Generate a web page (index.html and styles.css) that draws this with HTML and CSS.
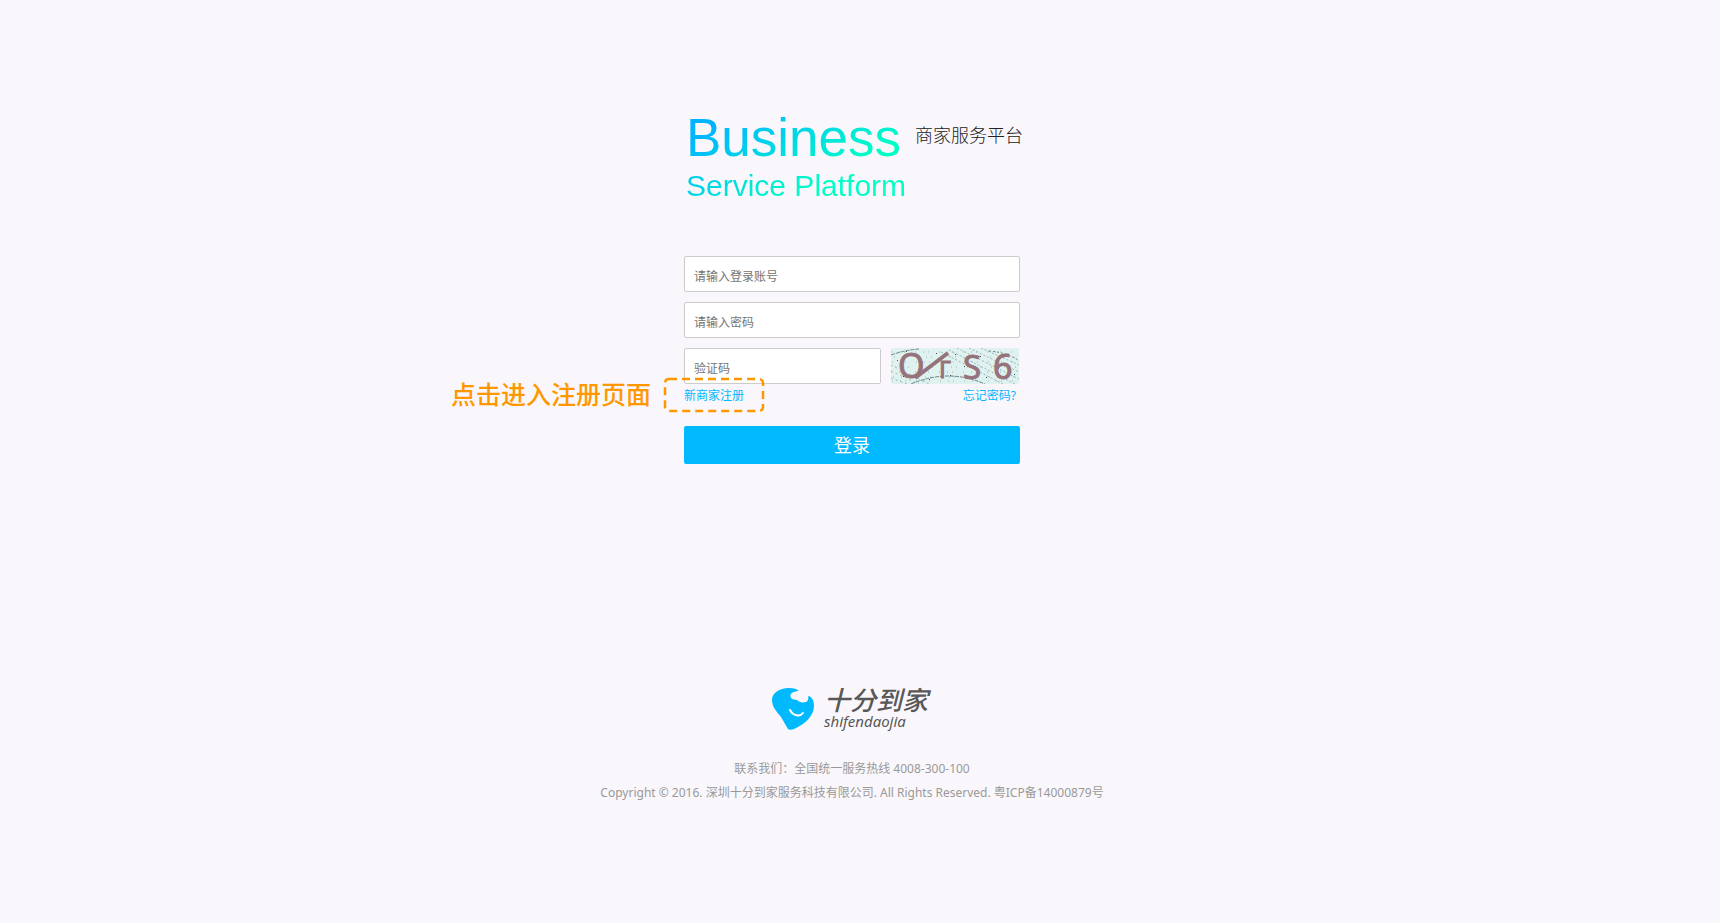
FILE: index.html
```html
<!DOCTYPE html>
<html lang="zh-CN">
<head>
<meta charset="utf-8">
<title>商家服务平台</title>
<link rel="stylesheet" href="styles.css">
</head>
<body>
<main class="login">
  <header class="brand">
    <h1 class="brand-name"><span class="brand-main">Business</span><span class="brand-sub">Service Platform</span></h1>
    <p class="brand-cn">商家服务平台</p>
  </header>
  <form class="form">
    <input class="field" type="text" aria-label="登录账号" placeholder="请输入登录账号">
    <input class="field" type="password" aria-label="密码" placeholder="请输入密码">
    <div class="code-row">
      <input class="field" type="text" aria-label="验证码" placeholder="验证码">
      <svg class="captcha" viewBox="0 0 128 36" role="img" aria-label="验证码图片">
        <rect width="128" height="36" fill="#dff2f0"/>
        <g fill="none" stroke="#9db7b9" stroke-width="1">
          <path d="M0 4H128M3 9H128M1 14H128M4 19H128M0 24H128M2 29H128M1 33H128" stroke-dasharray="1 7 1 4 1 10"/>
          <path d="M58 2L124 36M66 0L128 31M78 0L128 24M50 4L112 36M90 0L128 17" stroke-dasharray="2 2"/>
          <path d="M0 30L16 36M0 23L28 36M0 17L38 36" stroke-dasharray="2 3"/>
        </g>
        <g fill="none" stroke="#6f8587" stroke-width="1">
          <path d="M0 7Q14 2 28 1M20 36Q58 20 94 36" stroke-dasharray="4 1"/>
          <path d="M98 3Q114 4 127 12" stroke-dasharray="2 2"/>
        </g>
        <g fill="#384a68">
          <path d="M6 12h1v1h-1zM15 3h1v1h-1zM31 14h1v1h-1zM45 5h1v1h-1zM59 27h1v1h-1zM64 6h1v1h-1zM73 18h1v1h-1zM89 8h1v1h-1zM95 29h1v1h-1zM107 20h1v1h-1zM123 26h1v1h-1zM12 28h1v1h-1zM38 31h1v1h-1z"/>
        </g>
        <path d="M24 30L57 5" stroke="#96737b" stroke-width="4"/>
        <g class="captcha-text">
          <text x="7" y="30" font-size="34">O</text>
          <text x="48" y="30" font-size="24">Γ</text>
          <text x="72" y="31" font-size="33">S</text>
          <text x="102" y="31" font-size="34">6</text>
        </g>
      </svg>
    </div>
    <div class="links">
      <div class="register">
        <a href="#register">新商家注册</a>
        <div class="callout">
          <span class="callout-text">点击进入注册页面</span>
          <svg class="callout-box" viewBox="0 0 102 36" aria-hidden="true"><rect x="2" y="2" width="98" height="32" rx="4" fill="none" stroke="#ff9800" stroke-width="2.5" stroke-dasharray="8 5"/></svg>
        </div>
      </div>
      <a href="#forgot">忘记密码?</a>
    </div>
    <button class="submit" type="submit">登录</button>
  </form>
  <footer class="footer">
    <div class="company">
      <svg class="company-mark" viewBox="0 0 42 42" aria-hidden="true">
        <path fill="#00b9ff" d="M17 0C7 0 0 5 0 12C0 19 5 24 9 29C12 34 14 38 16 41C17 42 20 42 22 41C33 36 42 28 42 18C42 14 41 10 37 8C35 8 38 12 34 14C30 15 27 14 25 12C20 12 17 9 19 6C20 4 24 3 27 3C25 1 22 0 17 0Z"/>
        <path fill="none" stroke="#fff" stroke-width="2" stroke-linecap="round" d="M18 22C21 28 28 29 31 25"/>
      </svg>
      <div class="company-name"><span class="company-cn">十分到家</span><span class="company-en">shifendaojia</span></div>
    </div>
    <p class="note">联系我们：全国统一服务热线 4008-300-100</p>
    <p class="note">Copyright © 2016. 深圳十分到家服务科技有限公司. All Rights Reserved. 粤ICP备14000879号</p>
  </footer>
</main>
</body>
</html>
```
FILE: styles.css
```css
* { box-sizing: border-box; }
body {
  margin: 0;
  min-height: 100vh;
  background: #f9f7fb;
  color: #333;
  font: 12px/24px "Noto Sans", "Noto Sans CJK SC", sans-serif;
}
h1, p { margin: 0; font-weight: 400; }
a { color: #00b7ff; text-decoration: none; }
.login {
  display: flex;
  flex-direction: column;
  align-items: center;
  padding: 108px 16px 32px 0;
}
.brand {
  display: flex;
  gap: 9px;
  width: 100%;
  max-width: 336px;
  white-space: nowrap;
}
.brand-name {
  display: flex;
  flex-direction: column;
  padding-left: 2px;
  font-family: "Liberation Sans", Arial, sans-serif;
  color: transparent;
  background: linear-gradient(150deg, #00b4ff 15%, #00ffc6 70%);
  background-clip: text;
  -webkit-background-clip: text;
}
.brand-main { font-size: 53px; line-height: 60px; }
.brand-sub { font-size: 30px; line-height: 36px; }
.brand-cn { padding-top: 15px; color: #222; font-size: 18px; font-weight: 300; }
.form {
  display: flex;
  flex-direction: column;
  gap: 10px;
  width: 100%;
  max-width: 336px;
  margin-top: 52px;
}
.field {
  width: 100%;
  height: 36px;
  padding: 4px 9px 0;
  border: 1px solid #ccc;
  border-radius: 2px;
  background: #fff;
  color: #333;
  font: inherit;
}
.field::placeholder { color: #757575; opacity: 1; }
.code-row { display: flex; gap: 10px; padding-right: 1px; }
.code-row .field { flex: 1; min-width: 0; }
.captcha { flex: none; width: 128px; height: 36px; border-radius: 2px; }
.captcha-text { fill: #96737b; stroke: #96737b; font-family: "Noto Sans", sans-serif; }
.links {
  display: flex;
  justify-content: space-between;
  margin-top: -10px;
  padding-right: 4px;
}
.register { position: relative; }
.callout {
  position: absolute;
  right: -21px;
  top: -7px;
  display: flex;
  align-items: flex-start;
  gap: 12px;
  color: #ff9800;
  white-space: nowrap;
  pointer-events: none;
}
.callout-text { font-size: 25px; font-weight: 500; line-height: 34px; }
.callout-box { width: 102px; height: 36px; }
.submit {
  height: 38px;
  margin-top: 8px;
  padding: 0;
  border: 0;
  border-radius: 2px;
  background: #00b9ff;
  color: #fff;
  font: inherit;
  font-size: 18px;
}
.footer {
  display: flex;
  flex-direction: column;
  align-items: center;
  margin-top: 224px;
  color: #999;
  text-align: center;
}
.company { display: flex; gap: 10px; margin-bottom: 27px; padding-right: 4px; }
.company-mark { width: 42px; height: 42px; }
.company-name {
  display: flex;
  flex-direction: column;
  color: #595757;
  font-style: italic;
  text-align: left;
}
.company-cn { font-size: 26px; font-weight: 500; line-height: 24px; }
.company-en { font-size: 15px; line-height: 18px; }
```
